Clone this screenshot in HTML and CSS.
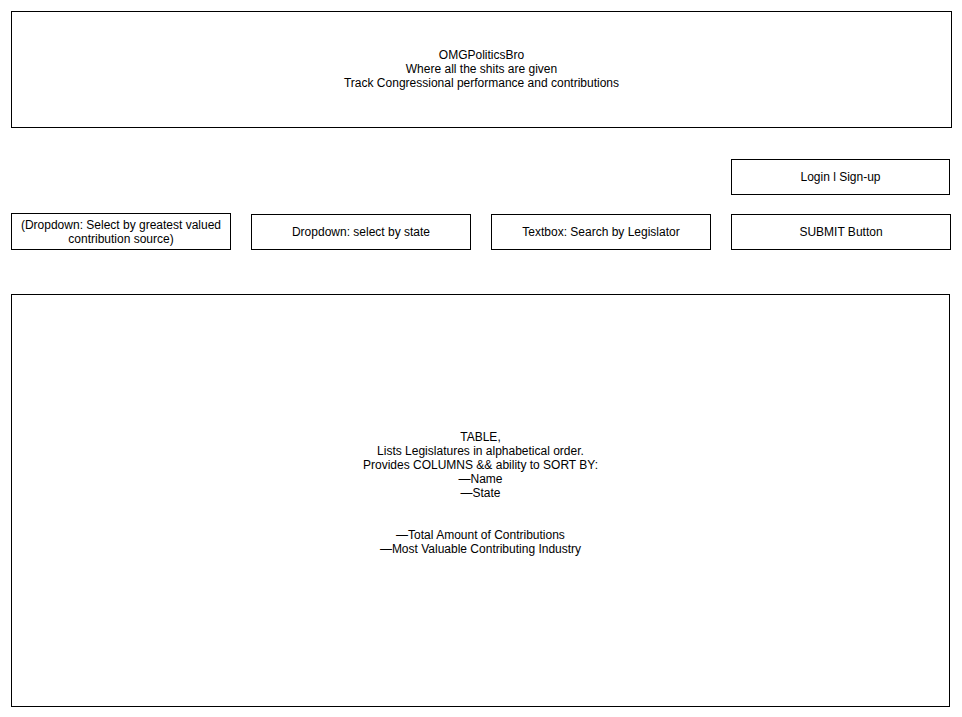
FILE: index.html
```html
<!DOCTYPE html>
<html>
<head>
    <title>OMGPoliticsBro</title>
    <link rel="stylesheet" href="styles.css">
</head>
<body>
<div class="page">
    <div class="box header">
        OMGPoliticsBro<br>
        Where all the shits are given<br>
        Track Congressional performance and contributions
    </div>
    <div class="account">
        <div class="box login">Login l Sign-up</div>
    </div>
    <div class="filters">
        <div class="box filter tall">(Dropdown: Select by greatest valued contribution source)</div>
        <div class="box filter">Dropdown: select by state</div>
        <div class="box filter">Textbox: Search by Legislator</div>
        <div class="box filter">SUBMIT Button</div>
    </div>
    <div class="box table">
        TABLE,<br>
        Lists Legislatures in alphabetical order.<br>
        Provides COLUMNS &amp;&amp; ability to SORT BY:<br>
        —Name<br>
        —State<br>
        <br>
        <br>
        —Total Amount of Contributions<br>
        —Most Valuable Contributing Industry<br>
        <br>
    </div>
</div>
</body>
</html>
```

FILE: styles.css
```css
html, body {
    margin:0;
    padding:0;
    background:#FFFFFF;
}

.page {
    padding:11px;
    font-family: "Liberation Sans", "Helvetica", "Arial", sans-serif;
    font-size:12px;
    line-height:14px;
    color:#000000;
}

.box {
    box-sizing:border-box;
    border:1px solid #000000;
    display:flex;
    align-items:center;
    justify-content:center;
    text-align:center;
}

.header {
    width:941px;
    height:117px;
    padding-bottom:2px;
}

.account {
    width:941px;
    display:flex;
    justify-content:flex-end;
    margin-top:31px;
}

.login {
    width:219px;
    height:36px;
    margin-right:2px;
}

.filters {
    display:flex;
    align-items:flex-end;
    gap:20px;
    margin-top:18px;
}

.filter {
    width:221px;
    height:36px;
    padding:0 6px;
}

.filter.tall {
    height:37px;
}

.table {
    width:939px;
    height:413px;
    margin-top:44px;
    padding-bottom:2px;
}
```
